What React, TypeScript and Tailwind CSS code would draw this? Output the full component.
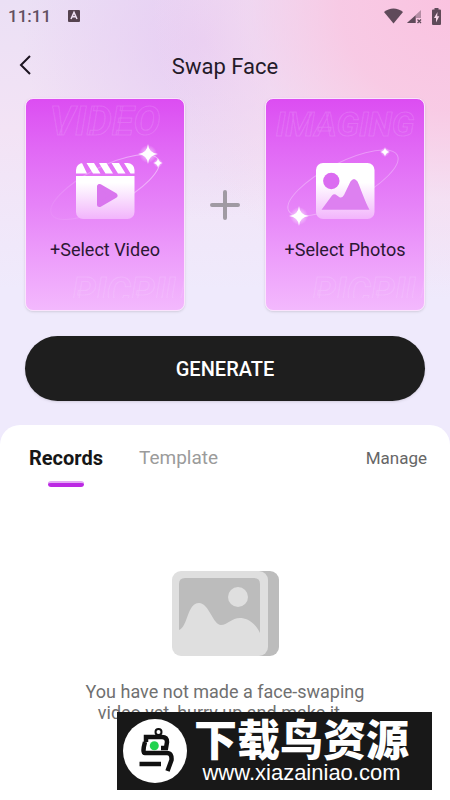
import React from "react";

function StatusBar() {
  return (
    <div className="flex h-8 items-center justify-between px-2 text-[#62505f]">
      <div className="flex items-center gap-4">
        <span className="text-[17px] leading-5 font-medium">11:11</span>
        <svg className="h-3.5 w-3.5" viewBox="0 0 14 14" aria-hidden="true">
          <rect x="1" y="1" width="12" height="12" rx="1" fill="#55434f" />
          <path d="M4 10 7 3.4 10 10M5.2 7.8h3.6" fill="none" stroke="#f0e2f4" strokeWidth="1.5" />
        </svg>
      </div>
      <div className="flex items-center gap-1 text-[#5f4a5a]">
        <svg className="h-4 w-[19px]" viewBox="0 0 19 16" aria-hidden="true">
          <path d="M0 4C5.5-.7 13.5-.7 19 4L9.5 15.5Z" fill="currentColor" />
        </svg>
        <svg className="h-4 w-4" viewBox="0 0 16 16" aria-hidden="true">
          <path d="M14 2v8H9v5H0Z" fill="currentColor" opacity=".45" />
          <path d="M8.5 7.5V15H0Z" fill="currentColor" />
          <path d="m10.500 11.500 3.500 3.500m0-3.500-3.500 3.500" stroke="currentColor" strokeWidth="1.3" />
        </svg>
        <svg className="ml-1 h-[17px] w-[11px]" viewBox="0 0 11 17" aria-hidden="true">
          <path d="M3.500 0h4v1.500H9a1 1 0 0 1 1 1V16a1 1 0 0 1-1 1H2a1 1 0 0 1-1-1V2.500a1 1 0 0 1 1-1h1.500Z" fill="currentColor" />
          <path d="M6.500 4 3 10h2v4.500L8.300 8.300H6.200Z" fill="#f8d8ea" />
        </svg>
      </div>
    </div>
  );
}

function Star({ x, y, r }: { x: number; y: number; r: number }) {
  const k = r * 0.08;
  return (
    <g transform={`translate(${x} ${y})`}>
      <circle r={r * 0.9} fill="url(#glow)" />
      <path d={`M0 ${-r}Q${k} ${-k} ${r} 0Q${k} ${k} 0 ${r}Q${-k} ${k} ${-r} 0Q${-k} ${-k} 0 ${-r}Z`} fill="#fff" />
    </g>
  );
}

function SharedDefs() {
  return (
    <defs>
      <linearGradient id="fade" x1="0" y1="23" x2="0" y2="79" gradientUnits="userSpaceOnUse">
        <stop offset="0.35" stopColor="#fff" />
        <stop offset="1" stopColor="#f2b4fc" />
      </linearGradient>
      <linearGradient id="orbit" x1="0" x2="1" y1="0" y2="0">
        <stop offset="0" stopColor="#fff" stopOpacity="0.05" />
        <stop offset="1" stopColor="#fff" stopOpacity="0.5" />
      </linearGradient>
      <radialGradient id="glow">
        <stop offset="0" stopColor="#fff" stopOpacity="0.8" />
        <stop offset="1" stopColor="#fff" stopOpacity="0" />
      </radialGradient>
    </defs>
  );
}

function VideoArt() {
  return (
    <svg className="h-[90px] w-[158px]" viewBox="0 0 158 90" aria-hidden="true">
      <SharedDefs />
      <ellipse cx="79" cy="47" rx="60" ry="20" transform="rotate(-27 79 47)" fill="none" stroke="url(#orbit)" />
      <clipPath id="clapper">
        <rect x="50" y="23" width="58.5" height="56" rx="7" />
      </clipPath>
      <g clipPath="url(#clapper)">
        <path
          d="M50 23h6l5 10.500H50ZM60.500 23h7.500l6.500 10.500H67ZM73 23h7.500l6.500 10.500h-7.500ZM85.500 23H93l6.500 10.500H92ZM98 23h11v10.500h-4.500Z"
          fill="#fff"
        />
        <rect x="50" y="36" width="59" height="43" fill="url(#fade)" />
      </g>
      <path d="M73.500 46.500v18L89 55.500Z" fill="#d975ee" stroke="#d975ee" strokeWidth="5" strokeLinejoin="round" />
      <Star x={122} y={14} r={10} />
      <Star x={132} y={23} r={5} />
    </svg>
  );
}

function PhotoArt() {
  return (
    <svg className="h-[90px] w-[158px]" viewBox="0 0 158 90" aria-hidden="true">
      <ellipse cx="77" cy="43" rx="61" ry="20" transform="rotate(-27 77 43)" fill="none" stroke="#fff" strokeOpacity="0.3" />
      <rect x="50" y="23" width="58.5" height="56" rx="7" fill="url(#fade)" />
      <circle cx="65.3" cy="41" r="8.2" fill="#db6cf1" />
      <path
        d="M55.500 69.700 66 55.500Q68.300 52.800 71 55.500L73.500 57.300Q76 58.500 78 55L84.500 41.500Q88 36.500 91.500 41.500C95 49 99 62 103.500 69.700Z"
        fill="#dd80f0"
      />
      <Star x={119} y={12} r={5} />
      <Star x={33} y={76} r={10} />
    </svg>
  );
}

function SourceCard({ ghost, ghostClass, label, art }: { ghost: string; ghostClass: string; label: string; art: React.ReactNode }) {
  return (
    <button
      type="button"
      className="flex h-[213px] w-40 flex-col items-center overflow-hidden rounded-lg border border-[#fbe3fd] bg-linear-to-b from-[#dc4df2] via-[#e682f8] to-[#f3b8fd] shadow-sm"
    >
      <span
        aria-hidden="true"
        className={"flex h-[41px] shrink-0 items-end font-bold text-transparent italic [-webkit-text-stroke:1px_rgba(255,255,255,0.14)] " + ghostClass}
      >
        {ghost}
      </span>
      {art}
      <span className="mt-2 text-[18px] leading-6 text-[#2b1733]">{label}</span>
      <span
        aria-hidden="true"
        className="mt-3 h-6 w-28 shrink-0 self-end overflow-hidden text-left text-[38px] leading-9 font-bold whitespace-nowrap text-transparent italic [-webkit-text-stroke:1px_rgba(255,255,255,0.14)]"
      >
        PICPIU
      </span>
    </button>
  );
}

function EmptyPicture() {
  return (
    <svg className="h-[85px] w-[107px]" viewBox="0 0 107 85" aria-hidden="true">
      <rect x="40" width="67" height="85" rx="9" fill="#bcbcbc" />
      <rect width="96" height="85" rx="9" fill="#dfdfdf" />
      <path
        d="M7 59V13q0-6 6-6h69q6 0 6 6v49C82 50 74 47 68 47c-8 0-13 7-19 7C41 54 37 32 27 32C15 32 16 56 7 59Z"
        fill="#bcbcbc"
      />
      <circle cx="66" cy="26" r="10" fill="#dfdfdf" />
    </svg>
  );
}

function SiteBanner() {
  return (
    <div className="absolute right-[18px] bottom-[10px] left-[117px] flex h-[78px] items-center bg-[#181818] pl-1.5 text-white">
      <svg className="h-16 w-16 shrink-0" viewBox="6 8 64 64" aria-hidden="true">
        <circle cx="38" cy="40" r="32" fill="#fff" />
        <g fill="none" stroke="#111" strokeWidth="4.5">
          <circle cx="41.5" cy="21" r="3" strokeWidth="2" />
          <path d="M29 31V26H45q5 0 5 5l-1 6h-5" />
          <path d="M28 31q-3 11 0 11H50q5 0 4.500 7l-4 11" />
          <path d="M22.500 53H44" />
        </g>
        <circle cx="37.3" cy="34.7" r="4.5" fill="#22d34f" />
      </svg>
      <div className="flex flex-1 flex-col items-center pt-1 pr-4">
        <span className="font-['Noto_Sans_CJK_SC',sans-serif] text-[43px] leading-10 font-black whitespace-nowrap">下载鸟资源</span>
        <span className="font-['Liberation_Sans',sans-serif] text-[22px] leading-8 whitespace-nowrap">www.xiazainiao.com</span>
      </div>
    </div>
  );
}

export default function App() {
  return (
    <div className="relative flex min-h-screen flex-col overflow-hidden bg-[#efeafc] bg-[radial-gradient(circle_at_100%_0%,#fac3e0_0%,rgba(249,200,227,0.9)_110px,rgba(247,218,238,0.5)_200px,transparent_300px),radial-gradient(circle_at_45%_5%,#e7cdf3_0%,transparent_180px),linear-gradient(#ebe0f5,#f3e3f5_130px,#efeafc_290px)] font-[Roboto,sans-serif]">
      <StatusBar />
      <header className="grid h-[66px] grid-cols-[1fr_auto_1fr] items-center px-[18px]">
        <button type="button" aria-label="Back" className="flex h-8 w-8 items-center">
          <svg className="h-5 w-4" viewBox="0 0 16 20" fill="none" stroke="#1c1420" strokeWidth="2" aria-hidden="true">
            <path d="M12 1 3 10l9 9" />
          </svg>
        </button>
        <h1 className="pt-1 text-[22px] leading-8 text-[#241a29]">Swap Face</h1>
      </header>
      <main className="flex flex-1 flex-col">
        <div className="flex items-center justify-between px-[25px]">
          <SourceCard ghost="VIDEO" ghostClass="text-[40px] leading-9" label="+Select Video" art={<VideoArt />} />
          <svg className="h-[30px] w-[30px]" viewBox="0 0 30 30" stroke="#a09aa3" strokeWidth="4" strokeLinecap="round" aria-hidden="true">
            <path d="M15 2v26M2 15h26" />
          </svg>
          <SourceCard ghost="IMAGING" ghostClass="text-[34px] leading-8" label="+Select Photos" art={<PhotoArt />} />
        </div>
        <button type="button" className="mx-[25px] mt-[25px] h-[65px] rounded-full bg-[#1e1e1e] text-[20px] font-medium text-white shadow-sm">
          GENERATE
        </button>
        <section className="mt-6 flex flex-1 flex-col rounded-t-[20px] bg-white">
          <nav className="flex items-start px-[23px] pt-[21px] pl-[29px]">
            <button type="button" className="flex flex-col items-center gap-[11px] text-[20px] leading-6 font-bold text-[#161616]">
              Records
              <span className="h-1.5 w-9 rounded-full border-t-2 border-[#e3a8f5] bg-[#bb28e3]" />
            </button>
            <button type="button" className="ml-9 text-[19px] leading-6 text-[#9b9b9b]">Template</button>
            <button type="button" className="ml-auto text-[17px] leading-6 text-[#666666]">Manage</button>
          </nav>
          <div className="mt-[84px] flex flex-col items-center">
            <EmptyPicture />
            <p className="mt-[25px] w-[290px] text-center text-[18px] leading-[21px] text-[#707070]">
              You have not made a face-swaping video yet, hurry up and make it~
            </p>
          </div>
        </section>
      </main>
      <SiteBanner />
    </div>
  );
}
